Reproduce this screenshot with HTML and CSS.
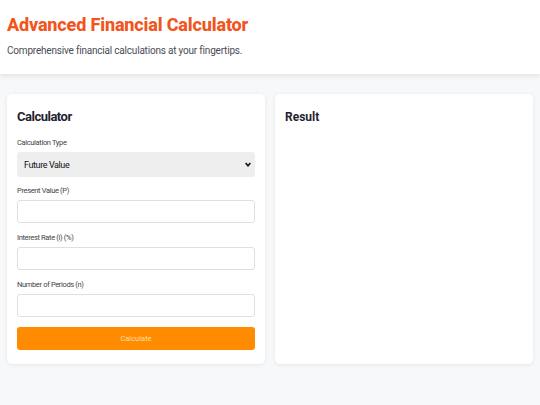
FILE: index.html
```html
<!DOCTYPE html>
<html lang="en">
<head>
<meta charset="utf-8">
<title>Advanced Financial Calculator</title>
<link rel="stylesheet" href="styles.css">
</head>
<body>
<header class="site-header">
  <h1 class="title">Advanced Financial Calculator</h1>
  <p class="subtitle">Comprehensive financial calculations at your fingertips.</p>
</header>
<main class="layout">
  <section class="card">
    <h2 class="card-title">Calculator</h2>
    <label class="field-label">Calculation Type</label>
    <div class="select-wrap">
      <select class="select">
        <option>Future Value</option>
      </select>
      <svg class="chevron" width="6" height="5" viewBox="0 0 6 5"><path d="M0.6 1 L3 3.8 L5.4 1" fill="none" stroke="#111" stroke-width="1.6"/></svg>
    </div>
    <label class="field-label">Present Value (P)</label>
    <input class="input" type="text">
    <label class="field-label">Interest Rate (i) (%)</label>
    <input class="input" type="text">
    <label class="field-label">Number of Periods (n)</label>
    <input class="input" type="text">
    <button class="btn" type="button">Calculate</button>
  </section>
  <section class="card">
    <h2 class="result-title">Result</h2>
  </section>
</main>
</body>
</html>
```
FILE: styles.css
```css
* { box-sizing: border-box; }
html, body { margin: 0; padding: 0; }
body {
  background: #f7f8fa;
  font-family: Roboto, "Liberation Sans", sans-serif;
  color: #222;
  width: 540px;
  height: 405px;
  overflow: hidden;
}
.site-header {
  background: #fff;
  height: 74px;
  padding: 13px 7px 0;
  box-shadow: 0 2px 5px rgba(0,0,0,0.09);
}
.title {
  margin: 0;
  font-size: 18px;
  line-height: 24px;
  letter-spacing: -0.15px;
  font-weight: 800;
  color: #f2541c;
}
.subtitle {
  margin: 7px 0 0;
  font-size: 10px;
  line-height: 14px;
  letter-spacing: -0.2px;
  color: #4a4d55;
}
.layout {
  display: grid;
  grid-template-columns: 1fr 1fr;
  gap: 10px;
  padding: 20px 7px 0;
}
.card {
  background: #fff;
  border-radius: 5px;
  box-shadow: 0 1px 4px rgba(0,0,0,0.08);
  padding: 14px 10px 14px;
  display: flex;
  flex-direction: column;
  height: 270px;
}
.card-title {
  margin: 0 0 12px;
  font-size: 13px;
  line-height: 18px;
  letter-spacing: -0.5px;
  font-weight: 700;
  color: #1f2430;
}
.result-title {
  margin: 0;
  font-size: 12px;
  line-height: 18px;
  font-weight: 700;
  color: #1f2430;
}
.field-label {
  display: block;
  font-size: 7.5px;
  line-height: 10px;
  letter-spacing: -0.35px;
  color: #444;
  margin-bottom: 4px;
}
.select-wrap {
  position: relative;
  margin-bottom: 9px;
}
.select {
  appearance: none;
  -webkit-appearance: none;
  width: 100%;
  height: 25px;
  border: none;
  border-radius: 3px;
  background: #eeeeee;
  font-family: inherit;
  font-size: 9px;
  letter-spacing: -0.4px;
  font-weight: 400;
  color: #111;
  padding: 0 7px;
  display: block;
}
.chevron {
  position: absolute;
  right: 4px;
  top: 10px;
}
.input {
  display: block;
  width: 100%;
  height: 23px;
  border: 1px solid #dcdfe3;
  border-radius: 3px;
  background: #fff;
  margin-bottom: 10px;
}
.btn {
  display: block;
  width: 100%;
  height: 23px;
  border: none;
  border-radius: 3px;
  background: #ff8c00;
  color: #ffdcaa;
  font-family: inherit;
  font-size: 7.5px;
}
```
